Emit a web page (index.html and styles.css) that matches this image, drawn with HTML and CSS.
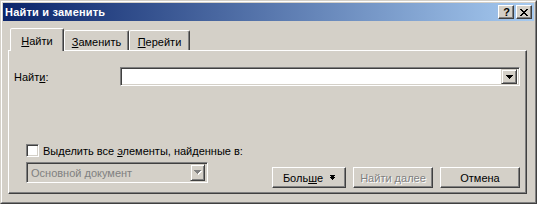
FILE: index.html
```html
<!DOCTYPE html>
<html lang="ru">
<head>
<meta charset="utf-8">
<title>Найти и заменить</title>
<link rel="stylesheet" href="styles.css">
</head>
<body>
<div class="window">
  <div class="frame">
    <div class="titlebar">
      <span class="title">Найти и заменить</span>
      <div class="caption-btns">
        <span class="cbtn help">?</span>
        <span class="cbtn close"><svg width="8" height="7" viewBox="0 0 8 7" shape-rendering="crispEdges"><path fill="#000" d="M0 0h2v1H0z M6 0h2v1H6z M1 1h2v1H1z M5 1h2v1H5z M2 2h4v1H2z M3 3h2v1H3z M2 4h4v1H2z M1 5h2v1H1z M5 5h2v1H5z M0 6h2v1H0z M6 6h2v1H6z"/></svg></span>
      </div>
    </div>
    <div class="client">
      <div class="tabs">
        <div class="tab active t1"><u>Н</u>айти</div>
        <div class="tab t2"><u>З</u>аменить</div>
        <div class="tab t3"><u>П</u>ерейти</div>
      </div>
      <div class="panel">
        <div class="find-row">
          <span class="label">Найт<u>и</u>:</span>
          <div class="combo find-combo">
            <div class="combo-text"></div>
            <span class="drop"><svg width="7" height="4" viewBox="0 0 7 4" shape-rendering="crispEdges"><path fill="#000" d="M0 0h7v1H0z M1 1h5v1H1z M2 2h3v1H2z M3 3h1v1H3z"/></svg></span>
          </div>
        </div>
        <div class="spacer"></div>
        <div class="bottom">
          <div class="left-col">
            <div class="check-row">
              <span class="checkbox"></span>
              <span class="check-label">Выделить все <u>э</u>лементы, найденные в:</span>
            </div>
            <div class="combo doc-combo disabled">
              <div class="combo-text">Основной документ</div>
              <span class="drop"><svg width="8" height="5" viewBox="0 0 8 5" shape-rendering="crispEdges"><path fill="#fff" d="M1 1h7v1H1z M2 2h5v1H2z M3 3h3v1H3z M4 4h1v1H4z"/><path fill="#808080" d="M0 0h7v1H0z M1 1h5v1H1z M2 2h3v1H2z M3 3h1v1H3z"/></svg></span>
            </div>
          </div>
          <div class="buttons">
            <span class="btn more"><span>Боль<u>ш</u>е</span><svg class="more-icon" width="5" height="5" viewBox="0 0 5 5" shape-rendering="crispEdges"><path fill="#000" d="M0 0h5v1H0z M1 1h3v1H1z M0 2h5v1H0z M1 3h3v1H1z M2 4h1v1H2z"/></svg></span>
            <span class="btn disabled-btn">Найти далее</span>
            <span class="btn">Отмена</span>
          </div>
        </div>
      </div>
    </div>
  </div>
</div>
</body>
</html>
```

FILE: styles.css
```css
* { box-sizing: border-box; }
html, body { margin: 0; padding: 0; }
body {
  width: 537px;
  height: 204px;
  overflow: hidden;
  background: #d4d0c8;
  font-family: "Liberation Sans", Arial, sans-serif;
  font-size: 11px;
  color: #000;
}
u { text-decoration: underline; text-underline-offset: 1px; }

.window {
  width: 537px;
  height: 204px;
  border: 1px solid;
  border-color: #d4d0c8 #404040 #404040 #d4d0c8;
  background: #d4d0c8;
}
.frame {
  height: 100%;
  border: 1px solid;
  border-color: #fff #808080 #808080 #fff;
  padding: 1px;
  display: flex;
  flex-direction: column;
}

.titlebar {
  height: 18px;
  flex: none;
  display: flex;
  align-items: center;
  justify-content: space-between;
  padding: 0 2px 0 2px;
  background: linear-gradient(to right, #0a246a, #a6caf0);
}
.title {
  color: #fff;
  font-weight: bold;
  font-size: 11px;
  line-height: 18px;
  letter-spacing: 0.2px;
}
.caption-btns { display: flex; gap: 2px; }
.cbtn {
  width: 16px;
  height: 14px;
  display: flex;
  align-items: center;
  justify-content: center;
  background: #d4d0c8;
  border: 1px solid;
  border-color: #fff #404040 #404040 #fff;
  box-shadow: inset -1px -1px #808080;
}
.help {
  font-weight: bold;
  font-size: 11px;
  line-height: 12px;
  padding-left: 1px;
}
.close svg { display: block; margin-left: -1px; }

.client {
  flex: 1;
  padding: 7px 7px 7px 5px;
  display: flex;
  flex-direction: column;
}

.tabs {
  display: flex;
  align-items: flex-end;
  height: 22px;
  padding-left: 2px;
}
.tab {
  height: 20px;
  border: 1px solid;
  border-bottom: none;
  border-color: #fff #404040 transparent #fff;
  border-radius: 2px 2px 0 0;
  box-shadow: inset -1px 0 #808080;
  text-align: center;
  line-height: 13px;
  padding-top: 5px;
  background: #d4d0c8;
}
.tab.active {
  height: 23px;
  margin-bottom: -1px;
  padding-top: 6px;
  position: relative;
  z-index: 1;
}
.t1 { width: 54px; }
.t2 { width: 65px; }
.t3 { width: 61px; }

.panel {
  height: 144px;
  border: 1px solid;
  border-color: #fff #404040 #404040 #fff;
  box-shadow: inset -1px -1px #808080;
  display: flex;
  flex-direction: column;
}

.find-row {
  margin-top: 16px;
  display: flex;
  align-items: center;
  padding-left: 5px;
}
.label { width: 106px; }

.combo {
  display: flex;
  align-items: center;
  border: 1px solid;
  border-color: #808080 #fff #fff #808080;
  box-shadow: inset 1px 1px #404040, inset -1px -1px #d4d0c8;
  padding: 2px;
  background: #fff;
}
.combo-text { flex: 1; padding-left: 2px; }
.find-combo { width: 400px; height: 19px; }
.drop {
  width: 16px;
  height: 15px;
  display: flex;
  align-items: center;
  justify-content: center;
  background: #d4d0c8;
  border: 1px solid;
  border-color: #d4d0c8 #404040 #404040 #d4d0c8;
  box-shadow: inset 1px 1px #fff, inset -1px -1px #808080;
}
.drop svg { display: block; }

.spacer { flex: 1; }

.bottom {
  display: flex;
  justify-content: space-between;
  align-items: flex-end;
  padding: 0 6px 5px 17px;
}
.left-col {
  margin-bottom: 5px;
  display: flex;
  flex-direction: column;
  gap: 5px;
}
.check-row {
  display: flex;
  align-items: center;
  height: 13px;
  gap: 4px;
}
.checkbox {
  width: 13px;
  height: 13px;
  background: #fff;
  border: 1px solid;
  border-color: #808080 #fff #fff #808080;
  box-shadow: inset 1px 1px #404040, inset -1px -1px #d4d0c8;
}
.doc-combo {
  width: 182px;
  height: 21px;
  background: #d4d0c8;
}
.doc-combo .combo-text { color: #808080; padding-left: 2px; }
.doc-combo .drop {
  width: 15px;
  height: 17px;
}

.buttons { display: flex; gap: 7px; }
.btn {
  width: 80px;
  height: 21px;
  display: flex;
  align-items: center;
  justify-content: center;
  border: 1px solid;
  border-color: #fff #404040 #404040 #fff;
  box-shadow: inset -1px -1px #808080;
  background: #d4d0c8;
}
.btn.more { width: 74px; gap: 7px; }
.more-icon { display: block; }
.disabled-btn { color: #808080; text-shadow: 1px 1px #fff; }
```
